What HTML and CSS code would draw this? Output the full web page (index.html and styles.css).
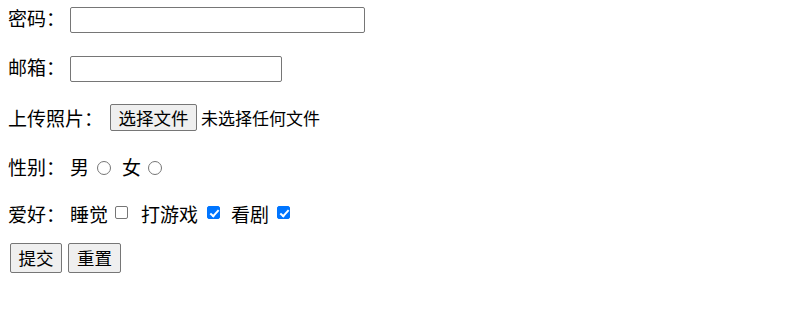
FILE: index.html
```html
<!DOCTYPE html>
<html lang="zh-CN">
<head>
<meta charset="utf-8">
<title>表单</title>
<link rel="stylesheet" href="styles.css">
</head>
<body>
<form class="form">
  <div class="row row-1">
    <span class="label">密码：</span>
    <input class="text-input pwd" type="password">
  </div>
  <div class="row row-2">
    <span class="label">邮箱：</span>
    <input class="text-input mail" type="text">
  </div>
  <div class="row row-3">
    <span class="label">上传照片：</span>
    <button type="button" class="btn file-btn">选择文件</button>
    <span class="file-status">未选择任何文件</span>
  </div>
  <div class="row row-4">
    <span class="label">性别：</span>
    <span class="opt first">男</span><input class="radio r1" type="radio" name="sex">
    <span class="opt o-nv">女</span><input class="radio r2" type="radio" name="sex">
  </div>
  <div class="row row-5">
    <span class="label">爱好：</span>
    <span class="opt first">睡觉</span><input class="check c1" type="checkbox">
    <span class="opt o-game">打游戏</span><input class="check c2" type="checkbox" checked>
    <span class="opt o-ju">看剧</span><input class="check c3" type="checkbox" checked>
  </div>
  <div class="row row-6">
    <button type="submit" class="btn act submit">提交</button>
    <button type="reset" class="btn act reset">重置</button>
  </div>
</form>
</body>
</html>
```

FILE: styles.css
```css
html, body {
  margin: 0;
  padding: 0;
  background: #ffffff;
}

body {
  font-family: "Microsoft YaHei", "Noto Sans CJK SC", "Noto Sans", sans-serif;
  color: #000000;
}

.form {
  display: flex;
  flex-direction: column;
  padding: 7px 0 0 8px;
}

.row {
  display: flex;
  align-items: center;
  font-size: 19px;
  line-height: 24px;
  white-space: nowrap;
}

.row-1 { height: 26px; }
.row-2 { height: 26px; margin-top: 23px; }
.row-3 { height: 27px; margin-top: 22px; }
.row-4 { height: 24px; margin-top: 24px; }
.row-5 { height: 24px; margin-top: 23px; }
.row-6 { height: 30px; margin-top: 17px; }

.label {
  display: block;
}

.row-1 .label,
.row-2 .label {
  padding-bottom: 4px;
}

.text-input {
  box-sizing: border-box;
  height: 26px;
  margin: 0 0 0 5px;
  padding: 1px 2px;
  border: 1px solid #767676;
  border-radius: 2px;
  background: #ffffff;
  font-size: 14px;
}

.pwd { width: 295px; }
.mail { width: 212px; }

.btn {
  box-sizing: border-box;
  margin: 0;
  padding: 0 6px;
  border: 1px solid #767676;
  border-radius: 2px;
  background: #efefef;
  color: #000000;
  font-family: "Microsoft YaHei", "Noto Sans CJK SC", "Noto Sans", sans-serif;
  font-size: 17.5px;
  line-height: 22px;
}

.file-btn {
  width: 87px;
  height: 27px;
  margin-left: 7px;
}

.file-status {
  margin-left: 4px;
  font-size: 17px;
}

.act {
  height: 30px;
}

.submit {
  width: 52px;
  margin-left: 2px;
}

.reset {
  width: 53px;
  margin-left: 6px;
}

.opt.first { margin-left: 5px; }

.radio,
.check {
  -webkit-appearance: none;
  appearance: none;
  box-sizing: border-box;
  position: relative;
  margin: 0;
  flex: none;
  background: #ffffff;
  border: 1px solid #767676;
}

.radio {
  width: 14px;
  height: 14px;
  border-radius: 50%;
  margin-top: 2px;
}

.check {
  width: 13px;
  height: 13px;
  border-radius: 2px;
  margin-bottom: 3px;
}

.check:checked {
  background: #0075ff;
  border-color: #0075ff;
}

.check:checked::after {
  content: "";
  position: absolute;
  left: 3.5px;
  top: 0.5px;
  width: 3px;
  height: 7px;
  border-right: 2px solid #ffffff;
  border-bottom: 2px solid #ffffff;
  transform: rotate(42deg);
}

.r1 { margin-left: 8px; }
.o-nv { margin-left: 11px; }
.r2 { margin-left: 7px; }

.c1 { margin-left: 7px; }
.o-game { margin-left: 13px; }
.c2 { margin-left: 9px; }
.o-ju { margin-left: 11px; }
.c3 { margin-left: 8px; }
```
